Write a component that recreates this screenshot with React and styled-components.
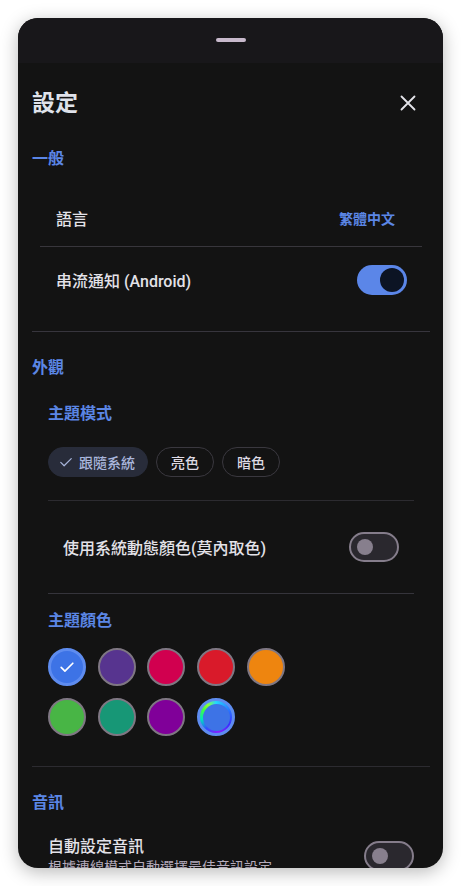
import React from "react";
import styled, { createGlobalStyle } from "styled-components";

const Global = createGlobalStyle`
  html, body { margin: 0; padding: 0; background: #ffffff; }
  body { font-family: Roboto, "Noto Sans CJK TC", sans-serif; }
  * { box-sizing: border-box; }
`;

const Page = styled.div`
  padding: 18px;
  width: 461px;
`;

const Dialog = styled.div`
  width: 425px;
  height: 850px;
  border-radius: 20px;
  background: #131313;
  overflow: hidden;
  box-shadow: 0 4px 18px rgba(0, 0, 0, 0.28);
  display: flex;
  flex-direction: column;
`;

const HandleArea = styled.div`
  height: 45px;
  flex-shrink: 0;
  background: #18171a;
  display: flex;
  justify-content: center;
  padding-top: 20px;
`;

const Handle = styled.div`
  width: 30px;
  height: 4px;
  border-radius: 2px;
  background: #c8b9cc;
`;

const Body = styled.div`
  padding: 0 13px 0 14px;
  display: flex;
  flex-direction: column;
`;

const TitleRow = styled.div`
  margin-top: 16px;
  height: 48px;
  display: flex;
  align-items: center;
  justify-content: space-between;
`;

const Title = styled.h1`
  margin: 0;
  font-size: 23px;
  font-weight: 700;
  color: #dfe2ea;
  line-height: 1;
`;

const CloseButton = styled.button`
  width: 44px;
  height: 44px;
  border: none;
  background: none;
  padding: 0;
  display: flex;
  align-items: center;
  justify-content: center;
  color: #e4e4ea;
`;

const SectionTitle = styled.div`
  margin-top: ${(p) => p.$mt || 24}px;
  height: 24px;
  line-height: 24px;
  font-size: 16px;
  font-weight: 700;
  color: #5b86e5;
`;

const SubTitle = styled(SectionTitle)`
  margin-left: 16px;
`;

const Group = styled.div`
  margin: ${(p) => p.$mt || 0}px 8px 0;
  display: flex;
  flex-direction: column;
`;

const Row = styled.div`
  height: ${(p) => p.$h}px;
  padding: 0 ${(p) => p.$pr ?? 15}px 0 ${(p) => p.$pl ?? 16}px;
  display: flex;
  align-items: center;
  justify-content: space-between;
`;

const Label = styled.span`
  font-size: 16px;
  font-weight: 500;
  color: #e3e2e8;
`;

const ValueButton = styled.span`
  font-size: 14px;
  font-weight: 700;
  color: #5b86e5;
  padding-right: 12px;
`;

const Divider = styled.div`
  height: 1px;
  background: ${(p) => p.$c || "#38363d"};
  margin: ${(p) => p.$mt || 0}px ${(p) => p.$mx || 0}px 0;
`;

const Track = styled.div`
  width: 50px;
  height: 30px;
  border-radius: 15px;
  flex-shrink: 0;
  display: flex;
  align-items: center;
  background: ${(p) => (p.$on ? "#5b86e8" : "#2a282e")};
  border: ${(p) => (p.$on ? "none" : "2px solid #857d8b")};
  justify-content: ${(p) => (p.$on ? "flex-end" : "flex-start")};
  padding: ${(p) => (p.$on ? "0 3px" : "0 6px")};
`;

const Thumb = styled.div`
  width: ${(p) => (p.$on ? 24 : 16)}px;
  height: ${(p) => (p.$on ? 24 : 16)}px;
  border-radius: 50%;
  background: ${(p) => (p.$on ? "#0c1424" : "#877f8d")};
`;

const Toggle = ({ on }) => (
  <Track $on={on}>
    <Thumb $on={on} />
  </Track>
);

const ChipRow = styled.div`
  margin: 21px 0 0 16px;
  display: flex;
  gap: 8px;
`;

const Chip = styled.div`
  height: 30px;
  border-radius: 15px;
  display: flex;
  align-items: center;
  gap: 4px;
  font-size: 14px;
  font-weight: 500;
  padding: ${(p) => (p.$selected ? "0 12px 0 8px" : "0 14px")};
  background: ${(p) => (p.$selected ? "#282c3a" : "transparent")};
  border: 1px solid ${(p) => (p.$selected ? "#282c3a" : "#3a383f")};
  color: ${(p) => (p.$selected ? "#a9b6dc" : "#dedae4")};
`;

const Swatches = styled.div`
  margin: 15px 0 0 16px;
  display: grid;
  grid-template-columns: repeat(5, 38px);
  column-gap: 11.7px;
  row-gap: 12px;
`;

const Swatch = styled.div`
  width: 38px;
  height: 38px;
  border-radius: 50%;
  background: ${(p) => p.$color};
  border: ${(p) => (p.$selected ? "3px solid #5e8cef" : "2px solid #7f7783")};
  display: flex;
  align-items: center;
  justify-content: center;
`;

const RainbowSwatch = styled.div`
  width: 38px;
  height: 38px;
  border-radius: 50%;
  border: 3px solid #5e8cef;
  background: conic-gradient(
    from 0deg,
    #22d8ff,
    #2a6cff 70deg,
    #3a2cff 120deg,
    #8a1cff 170deg,
    #3050ff 220deg,
    #00e0c0 260deg,
    #40ff40 300deg,
    #90ff30 325deg,
    #22d8ff
  );
  padding: 2.5px;
`;

const RainbowInner = styled.div`
  width: 100%;
  height: 100%;
  border-radius: 50%;
  background: #3d73e6;
`;

const AudioRow = styled.div`
  margin: 21px 16px 0;
  display: flex;
  align-items: center;
  justify-content: space-between;
`;

const TextBlock = styled.div`
  display: flex;
  flex-direction: column;
`;

const AudioLabel = styled.span`
  font-size: 16px;
  font-weight: 500;
  line-height: 22px;
  color: #e3e2e8;
`;

const AudioSub = styled.span`
  font-size: 14px;
  line-height: 18px;
  color: #b4aabb;
`;

const CheckIcon = ({ color, size = 18, sw = 1.8 }) => (
  <svg width={size} height={size} viewBox="0 0 24 24" fill="none" stroke={color} strokeWidth={sw} strokeLinecap="round" strokeLinejoin="round">
    <path d="M5 12.5l4.5 4.5L19 7.5" />
  </svg>
);

const colors = [
  "#3d73e6",
  "#57348f",
  "#d1004f",
  "#d91a2a",
  "#ee850f",
  "#48b545",
  "#179776",
  "#800099",
];

export default function App() {
  return (
    <>
      <Global />
      <Page>
        <Dialog>
          <HandleArea>
            <Handle />
          </HandleArea>
          <Body>
            <TitleRow>
              <Title>設定</Title>
              <CloseButton>
                <svg width="26" height="26" viewBox="0 0 24 24" fill="none" stroke="currentColor" strokeWidth="1.7" strokeLinecap="round">
                  <path d="M18 6L6 18M6 6l12 12" />
                </svg>
              </CloseButton>
            </TitleRow>

            <SectionTitle $mt={20}>一般</SectionTitle>
            <Group $mt={19}>
              <Row $h={56}>
                <Label>語言</Label>
                <ValueButton>繁體中文</ValueButton>
              </Row>
              <Divider $c="#38363c" />
              <Row $h={66}>
                <Label>串流通知 (Android)</Label>
                <Toggle on />
              </Row>
            </Group>
            <Divider $mt={18} $c="#37353d" />

            <SectionTitle>外觀</SectionTitle>
            <SubTitle $mt={22}>主題模式</SubTitle>
            <ChipRow>
              <Chip $selected>
                <CheckIcon color="#a9b6dc" size={18} sw={1.6} />
                跟隨系統
              </Chip>
              <Chip>亮色</Chip>
              <Chip>暗色</Chip>
            </ChipRow>
            <Divider $mt={23} $mx={16} $c="#2c2b30" />
            <Row $h={92} $pl={31} $pr={31}>
              <Label>使用系統動態顏色(莫內取色)</Label>
              <Toggle />
            </Row>
            <Divider $mx={16} $c="#35343b" />
            <SubTitle $mt={15}>主題顏色</SubTitle>
            <Swatches>
              {colors.map((c, i) => (
                <Swatch key={c} $color={c} $selected={i === 0}>
                  {i === 0 && <CheckIcon color="#ffffff" size={20} sw={2} />}
                </Swatch>
              ))}
              <RainbowSwatch>
                <RainbowInner />
              </RainbowSwatch>
            </Swatches>
            <Divider $mt={30} $c="#2c2b30" />

            <SectionTitle>音訊</SectionTitle>
            <AudioRow>
              <TextBlock>
                <AudioLabel>自動設定音訊</AudioLabel>
                <AudioSub>根據連線模式自動選擇最佳音訊設定</AudioSub>
              </TextBlock>
              <Toggle />
            </AudioRow>
          </Body>
        </Dialog>
      </Page>
    </>
  );
}
